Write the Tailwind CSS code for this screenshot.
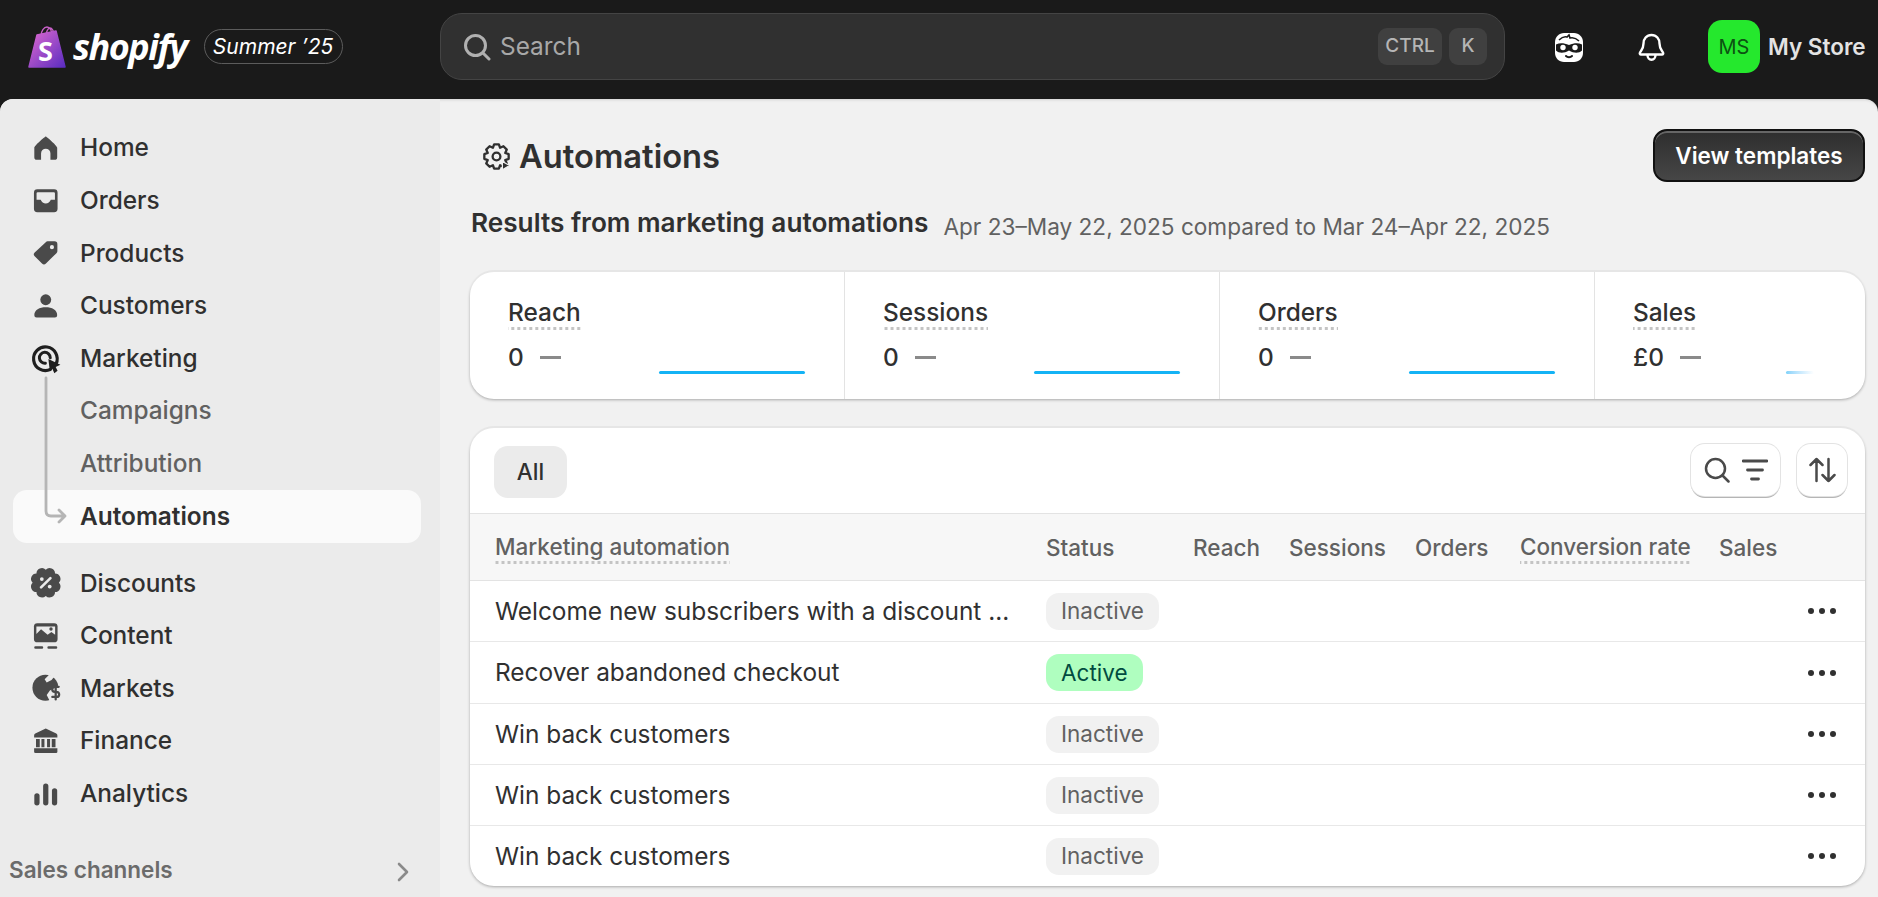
<!DOCTYPE html>
<html lang="en">
  <head>
    <meta charset="UTF-8" />
    <title>Automations</title>
    <script src="https://cdn.jsdelivr.net/npm/@tailwindcss/browser@4"></script>
  </head>
  <body class="bg-[#1a1a1a] font-['Inter','Liberation_Sans',sans-serif] text-[#303030] overflow-hidden">
    <div class="flex h-screen flex-col overflow-hidden">
      <!-- Top bar -->
      <header class="flex h-[99px] shrink-0 items-center pb-[6px]">
        <div class="flex w-[440px] shrink-0 items-center pl-[28px]">
          <svg class="h-[44px] w-[40px] shrink-0" viewBox="0 0 40 44">
            <defs>
              <linearGradient id="bag" x1="0" y1="0" x2="1" y2="1">
                <stop offset="0" stop-color="#e06ad0" />
                <stop offset="1" stop-color="#5a2cc0" />
              </linearGradient>
            </defs>
            <path d="M13 11c0-5 3-9 6-9s5 4 5 8M18 11c0-4 2-8 4-8s4 3 4 7" fill="none" stroke="#c860c8" stroke-width="1.4" />
            <path d="M9 10 L28 6 L37 42 L1 42Z" fill="url(#bag)" stroke="url(#bag)" stroke-width="1.5" stroke-linejoin="round" />
            <text x="10" y="36" fill="#fff" font-size="27" font-weight="700" font-family="Open Sans">S</text>
          </svg>
          <span class="ml-[5px] font-['Open_Sans'] text-[36px] leading-none font-bold tracking-[-1.5px] text-white italic">shopify</span>
          <span class="ml-[17px] flex h-[35px] w-[139px] items-center justify-center rounded-full border border-[#5c5c5c] text-[21px] text-white italic">Summer ’25</span>
        </div>
        <div class="flex h-[67px] w-[1065px] shrink-0 items-center rounded-[22px] border border-[#444] bg-[#303030] pr-[17px] pl-[22px]">
          <svg class="h-[28px] w-[28px] shrink-0" viewBox="0 0 28 28" fill="none" stroke="#b0b0b0" stroke-width="3" stroke-linecap="round">
            <circle cx="12.5" cy="12.5" r="10" />
            <path d="M20 20l6 6" />
          </svg>
          <span class="ml-[9px] text-[24.4px] text-[#a8a8a8]">Search</span>
          <span class="ml-auto flex h-[37px] w-[64px] items-center justify-center rounded-[9px] bg-[#404040] text-[19px] font-medium text-[#b5b5b5]">CTRL</span>
          <span class="ml-[7px] flex h-[37px] w-[38px] items-center justify-center rounded-[9px] bg-[#404040] text-[19px] font-medium text-[#b5b5b5]">K</span>
        </div>
        <svg class="ml-[50px] h-[30px] w-[28px] shrink-0" viewBox="0 0 28 30">
          <path d="M9 1h10c5 0 9 4 9 9v11c0 5-4 9-9 9h-10c-5 0-9-4-9-9v-11c0-5 4-9 9-9Z" fill="#fff" />
          <path d="M4 8c2-2 5-4 8-3l2-2 1 3c4-1 7 1 9 3" fill="none" stroke="#1a1a1a" stroke-width="1.6" />
          <path d="M1 12.500c4-2 8-1.500 13 .5 5-2 9-2.500 13-.5v6c-3 3-8 3-13 0-5 3-10 3-13 0Z" fill="#1a1a1a" />
          <circle cx="8" cy="15.5" r="2.700" fill="#fff" />
          <circle cx="20" cy="15.5" r="2.700" fill="#fff" />
          <path d="M11 24c1.500 1.500 4.500 1.500 6 0" fill="none" stroke="#1a1a1a" stroke-width="2" stroke-linecap="round" />
        </svg>
        <svg class="ml-[55px] h-[28px] w-[27px] shrink-0" viewBox="0 0 27 28" fill="none" stroke="#fff" stroke-width="2.4" stroke-linejoin="round">
          <path d="M13.5 2c-5 0-8 4-8 8.5 0 5-2 6.500-3.500 9-.6 1 0 2 1 2h21c1 0 1.600-1 1-2-1.500-2.500-3.500-4-3.500-9 0-4.500-3-8.500-8-8.500Z" />
          <path d="M9.500 22c0 3 1.800 4.800 4 4.800s4-1.800 4-4.800" />
        </svg>
        <span class="ml-[43px] flex h-[53px] w-[52px] shrink-0 items-center justify-center rounded-[14px] bg-[#25e82d] text-[20px] text-[#0c5212]">MS</span>
        <span class="ml-[8px] text-[22.500px] font-semibold whitespace-nowrap text-[#e3e3e3]">My Store</span>
      </header>

      <div class="flex min-h-0 flex-1 overflow-hidden rounded-t-[13px] bg-[#f1f1f1] shadow-[inset_0_3px_3px_-2px_rgba(0,0,0,.12)]">
        <!-- Sidebar -->
        <aside class="flex w-[440px] shrink-0 flex-col bg-[#ebebeb] pt-[22.5px] text-[24.4px] font-medium">
          <a class="flex h-[52.6px] items-center">
            <svg class="ml-[27px] h-[37.5px] w-[37.5px] shrink-0 fill-[#4a4a4a]" viewBox="0 0 20 20"><path d="M10 4c.5 0 6.100 5 6.100 6v5a1.400 1.400 0 0 1-1.400 1.400h-2.200v-3.400a2.500 2.500 0 0 0-5 0v3.400h-2.200a1.400 1.400 0 0 1-1.400-1.400v-5c0-1 5.600-6 6.100-6Z" /></svg>
            <span class="ml-[15.5px]">Home</span>
          </a>
          <a class="flex h-[52.6px] items-center">
            <svg class="ml-[27px] h-[37.5px] w-[37.5px] shrink-0 fill-[#4a4a4a]" viewBox="0 0 20 20"><path fill-rule="evenodd" d="M5.500 3.900h9a1.800 1.800 0 0 1 1.800 1.800v8.600a1.800 1.800 0 0 1-1.800 1.800h-9a1.800 1.800 0 0 1-1.800-1.800v-8.600a1.800 1.800 0 0 1 1.800-1.800Zm.2 1.500a.6.600 0 0 0-.6.600v3.500h2.200c.5 1.300 1.500 2 2.700 2s2.200-.7 2.700-2h2.200v-3.500a.6.600 0 0 0-.6-.6Z" /></svg>
            <span class="ml-[15.5px]">Orders</span>
          </a>
          <a class="flex h-[52.6px] items-center">
            <svg class="ml-[27px] h-[37.5px] w-[37.5px] shrink-0 fill-[#4a4a4a]" viewBox="0 0 20 20"><path fill-rule="evenodd" d="M11 3.900h3.700a1.500 1.500 0 0 1 1.500 1.500v3.800a1.500 1.500 0 0 1-.5 1l-5.600 5.600a1.500 1.500 0 0 1-2.100 0l-3.900-3.900a1.500 1.500 0 0 1 0-2.100l5.900-5.400a1.500 1.500 0 0 1 1-.5Zm2.300 2a1.100 1.100 0 1 0 0 2.200 1.100 1.100 0 0 0 0-2.200Z" /></svg>
            <span class="ml-[15.5px]">Products</span>
          </a>
          <a class="flex h-[52.6px] items-center">
            <svg class="ml-[27px] h-[37.5px] w-[37.5px] shrink-0 fill-[#4a4a4a]" viewBox="0 0 20 20"><circle cx="10" cy="6.800" r="2.900" /><path d="M3.900 15c0-2.800 2.800-4.200 6.100-4.200s6.100 1.400 6.100 4.200a1.200 1.200 0 0 1-1.200 1.200h-9.800a1.200 1.200 0 0 1-1.200-1.200Z" /></svg>
            <span class="ml-[15.5px]">Customers</span>
          </a>
          <a class="flex h-[52.6px] items-center">
            <svg class="ml-[27px] h-[37.5px] w-[37.5px] shrink-0" viewBox="0 0 20 20">
              <path d="M15.500 13.200a6.300 6.300 0 1 0-3 3" fill="none" stroke="#1f1f1f" stroke-width="1.700" stroke-linecap="round" />
              <path d="M12.400 10a2.900 2.900 0 1 0-2.600 2.900" fill="none" stroke="#1f1f1f" stroke-width="1.600" stroke-linecap="round" />
              <path d="M11.400 10.700l6.400 3-2.500 1.200 1 2-1.700 1.300-1.100-2.400-1.300 1.500Z" fill="#1f1f1f" />
            </svg>
            <span class="ml-[15.5px]">Marketing</span>
          </a>
          <div class="relative">
            <a class="flex h-[52.6px] items-center pl-[80px] text-[#616161]">Campaigns</a>
            <a class="flex h-[52.6px] items-center pl-[80px] text-[#616161]">Attribution</a>
            <a class="mx-[13px] flex h-[53px] w-[408px] items-center rounded-[14px] bg-[#fafafa] pl-[67px] font-semibold">Automations</a>
            <!-- tree line over the sub items -->
            <svg class="absolute top-[-8px] left-[42px] h-[150px] w-[28px]" viewBox="0 0 28 150" fill="none" stroke="#b5b5b5" stroke-width="2.800" stroke-linecap="round" stroke-linejoin="round">
              <path d="M4 2v133q0 5 5 5h14M17 134l6 6-6 6" />
            </svg>
          </div>
          <a class="mt-[14px] flex h-[52.6px] items-center">
            <svg class="ml-[27px] h-[37.5px] w-[37.5px] shrink-0" viewBox="0 0 20 20">
              <path d="M17 10A2.900 2.900 0 0 1 14.950 14.950 2.900 2.900 0 0 1 10 17 2.900 2.900 0 0 1 5.050 14.950 2.900 2.900 0 0 1 3 10 2.900 2.900 0 0 1 5.050 5.050 2.900 2.900 0 0 1 10 3 2.900 2.900 0 0 1 14.950 5.050 2.900 2.900 0 0 1 17 10Z" fill="#4a4a4a" />
              <path d="M12.500 7.500l-5 5" stroke="#ebebeb" stroke-width="1.400" stroke-linecap="round" />
              <circle cx="7.900" cy="8" r="1" fill="#ebebeb" />
              <circle cx="12.100" cy="12" r="1" fill="#ebebeb" />
            </svg>
            <span class="ml-[15.5px]">Discounts</span>
          </a>
          <a class="flex h-[52.6px] items-center">
            <svg class="ml-[27px] h-[37.5px] w-[37.5px] shrink-0" viewBox="0 0 20 20">
              <rect x="3.700" y="3.300" width="12.600" height="10.200" rx="1.800" fill="#4a4a4a" />
              <path d="M5 9l2.500-2.500 3.500 3 2-1.500 2 1.500v-4.500h-10Z" fill="#ebebeb" />
              <circle cx="12.800" cy="6.400" r=".9" fill="#4a4a4a" />
              <path d="M4.500 16.300h3.500M11.500 16.300h4" stroke="#4a4a4a" stroke-width="1.300" stroke-linecap="round" />
            </svg>
            <span class="ml-[15.5px]">Content</span>
          </a>
          <a class="flex h-[52.6px] items-center">
            <svg class="ml-[27px] h-[37.5px] w-[37.5px] shrink-0" viewBox="0 0 20 20">
              <circle cx="9.800" cy="10" r="6.900" fill="#4a4a4a" />
              <path d="M11.800 3l-2.400 2.400 1.100 1.800 2.600-1.400 1.500-1.800ZM12.200 17.200l-1.700-3.300 1.700-2.400 5-3v9Z" fill="#ebebeb" />
              <path d="M16.900 9.500h-2.100a1.100 1.100 0 0 0 0 2.700h1a1.100 1.100 0 0 1 0 2.700h-2.300M15.300 8.300v7.900" fill="none" stroke="#4a4a4a" stroke-width="1.200" stroke-linecap="round" />
            </svg>
            <span class="ml-[15.5px]">Markets</span>
          </a>
          <a class="flex h-[52.6px] items-center">
            <svg class="ml-[27px] h-[37.5px] w-[37.5px] shrink-0 fill-[#4a4a4a]" viewBox="0 0 20 20">
              <path d="M10 3.500l5.600 2.600a1 1 0 0 1 .6.900v1.300h-12.400v-1.300a1 1 0 0 1 .6-.9Z" />
              <path d="M3.800 14h12.400v1.800a.7.700 0 0 1-.7.700h-11a.7.700 0 0 1-.7-.7Z" />
              <path d="M4.800 9h2v4.500h-2ZM7.700 9h1.600v4.500h-1.600ZM10.700 9h1.600v4.500h-1.600ZM13.200 9h2v4.500h-2Z" />
            </svg>
            <span class="ml-[15.5px]">Finance</span>
          </a>
          <a class="flex h-[52.6px] items-center">
            <svg class="ml-[27px] h-[37.5px] w-[37.5px] shrink-0 fill-[#4a4a4a]" viewBox="0 0 20 20">
              <rect x="3.900" y="9.700" width="2.800" height="6.500" rx="1.400" />
              <rect x="8.600" y="4.500" width="2.800" height="11.700" rx="1.400" />
              <rect x="13.300" y="7" width="2.800" height="9.200" rx="1.400" />
            </svg>
            <span class="ml-[15.5px]">Analytics</span>
          </a>
          <div class="mt-[33px] flex items-center pr-[31px] pl-[9px] text-[22.5px] font-semibold text-[#6b6b6b]">
            <span>Sales channels</span>
            <svg class="mt-[4px] ml-auto h-[20px] w-[12px]" viewBox="0 0 12 20" fill="none" stroke="#8a8a8a" stroke-width="2.600" stroke-linecap="round" stroke-linejoin="round"><path d="M2 2l8 8-8 8" /></svg>
          </div>
        </aside>

        <!-- Main -->
        <main class="min-w-0 flex-1 pt-[30px] pr-[13px] pl-[30px]">
          <div class="flex items-start justify-between">
            <div class="mt-[7px] flex items-center pl-[11px]">
              <svg class="h-[31px] w-[31px] shrink-0" viewBox="0 0 20 20" fill="none" stroke="#303030" stroke-width="1.500" stroke-linejoin="round">
                <path d="M17.850 8.470V11.530L15.640 12.330 16.630 14.470 14.470 16.630 12.330 15.640 11.530 17.850H8.470L7.670 15.640 5.530 16.630 3.370 14.470 4.360 12.330 2.150 11.530V8.470L4.360 7.670 3.370 5.530 5.530 3.370 7.670 4.360 8.470 2.150H11.530L12.330 4.360 14.470 3.370 16.630 5.530 15.640 7.670Z" />
                <circle cx="10" cy="10" r="2.500" />
                <path d="M13.800 13.200v5.300l4.600-2.650Z" fill="#303030" stroke="#f1f1f1" stroke-width=".8" />
              </svg>
              <h1 class="ml-[7px] text-[32.7px] leading-[40px] font-semibold">Automations</h1>
            </div>
            <button class="h-[53px] w-[212px] rounded-[14px] border-[2.500px] border-[#111] bg-linear-to-b from-[#2e2e2e] to-[#464646] text-[22.5px] font-semibold text-white shadow-[inset_0_2px_0_#666]">View templates</button>
          </div>
          <div class="mt-[23px] flex items-baseline">
            <h2 class="ml-px text-[26.2px] leading-[36px] font-semibold">Results from marketing automations</h2>
            <span class="relative top-[3px] ml-[15px] text-[22.6px] text-[#616161]">Apr 23–May 22, 2025 compared to Mar 24–Apr 22, 2025</span>
          </div>

          <!-- Metrics card -->
          <section class="mt-[31px] flex h-[127px] overflow-hidden rounded-[24px] bg-white shadow-[0_-2px_0_#e6e6e6,0_1px_3px_rgba(0,0,0,.3)]">
            <div class="flex h-full w-[375px] shrink-0 border-r border-[#e3e3e3] pt-[25px] pl-[38px]">
              <div class="w-[151px] shrink-0">
                <span class="block w-fit bg-[linear-gradient(to_right,#c4c4c4_50%,transparent_50%)] bg-[length:6px_3px] bg-bottom bg-repeat-x pb-[3px] text-[24.4px] leading-[30px] font-medium">Reach</span>
                <div class="mt-[9px] flex items-center text-[24.4px] leading-[36px] font-medium">0<span class="ml-[16px] h-[3px] w-[21px] bg-[#8a8a8a]"></span></div>
              </div>
              <div class="mt-[74px] h-[3px] w-[146px] rounded-full bg-[#14b3f5]"></div>
            </div>
            <div class="flex h-full w-[375px] shrink-0 border-r border-[#e3e3e3] pt-[25px] pl-[38px]">
              <div class="w-[151px] shrink-0">
                <span class="block w-fit bg-[linear-gradient(to_right,#c4c4c4_50%,transparent_50%)] bg-[length:6px_3px] bg-bottom bg-repeat-x pb-[3px] text-[24.4px] leading-[30px] font-medium">Sessions</span>
                <div class="mt-[9px] flex items-center text-[24.4px] leading-[36px] font-medium">0<span class="ml-[16px] h-[3px] w-[21px] bg-[#8a8a8a]"></span></div>
              </div>
              <div class="mt-[74px] h-[3px] w-[146px] rounded-full bg-[#14b3f5]"></div>
            </div>
            <div class="flex h-full w-[375px] shrink-0 border-r border-[#e3e3e3] pt-[25px] pl-[38px]">
              <div class="w-[151px] shrink-0">
                <span class="block w-fit bg-[linear-gradient(to_right,#c4c4c4_50%,transparent_50%)] bg-[length:6px_3px] bg-bottom bg-repeat-x pb-[3px] text-[24.4px] leading-[30px] font-medium">Orders</span>
                <div class="mt-[9px] flex items-center text-[24.4px] leading-[36px] font-medium">0<span class="ml-[16px] h-[3px] w-[21px] bg-[#8a8a8a]"></span></div>
              </div>
              <div class="mt-[74px] h-[3px] w-[146px] rounded-full bg-[#14b3f5]"></div>
            </div>
            <div class="flex h-full min-w-0 flex-1 pt-[25px] pl-[38px]">
              <div class="w-[153px] shrink-0">
                <span class="block w-fit bg-[linear-gradient(to_right,#c4c4c4_50%,transparent_50%)] bg-[length:6px_3px] bg-bottom bg-repeat-x pb-[3px] text-[24.4px] leading-[30px] font-medium">Sales</span>
                <div class="mt-[9px] flex items-center text-[24.4px] leading-[36px] font-medium">£0<span class="ml-[16px] h-[3px] w-[21px] bg-[#8a8a8a]"></span></div>
              </div>
              <div class="mt-[74px] h-[3px] w-[28px] rounded-full bg-linear-to-r from-[#14b3f5]/60 to-white"></div>
            </div>
          </section>

          <!-- Automations table -->
          <section class="mt-[29px] overflow-hidden rounded-[24px] bg-white shadow-[0_-2px_0_#e6e6e6,0_1px_3px_rgba(0,0,0,.3)]">
            <div class="flex h-[85px] items-start pt-[18px] pr-[18px] pl-[24px]">
              <span class="flex h-[52px] w-[73px] items-center justify-center rounded-[14px] bg-[#ebebeb] text-[22.5px] font-medium">All</span>
              <button class="mt-[-2px] ml-auto flex h-[52px] w-[89px] items-center justify-center gap-[12px] rounded-[14px] bg-white shadow-[0_0_0_1px_#e3e3e3,0_2px_0_#b5b5b5]">
                <svg class="h-[26px] w-[26px]" viewBox="0 0 26 26" fill="none" stroke="#4a4a4a" stroke-width="2.500" stroke-linecap="round"><circle cx="11.500" cy="11.500" r="9.500" /><path d="M18.500 18.500l6 6" /></svg>
                <svg class="h-[26px] w-[26px]" viewBox="0 0 26 26" fill="none" stroke="#4a4a4a" stroke-width="2.800" stroke-linecap="round"><path d="M1 4h24M5.500 13h15M9.500 22h7" /></svg>
              </button>
              <button class="mt-[-2px] ml-[17px] flex h-[52px] w-[50px] items-center justify-center rounded-[14px] bg-white shadow-[0_0_0_1px_#e3e3e3,0_2px_0_#b5b5b5]">
                <svg class="h-[26px] w-[27px]" viewBox="0 0 27 26" fill="none" stroke="#4a4a4a" stroke-width="2.500" stroke-linecap="round" stroke-linejoin="round"><path d="M7.500 24V2M1.500 8l6-6 6 6M19.500 2v22M13.500 18l6 6 6-6" /></svg>
              </button>
            </div>
            <div class="grid h-[68px] grid-cols-[551px_147px_96px_126px_105px_199px_1fr] items-center border-y border-[#e3e3e3] bg-[#f7f7f7] pt-px pl-[25px] text-[22.5px] font-medium text-[#616161]">
              <span class="w-fit bg-[linear-gradient(to_right,#c4c4c4_50%,transparent_50%)] bg-[length:6px_3px] bg-bottom bg-repeat-x pb-[2px] leading-[30px]">Marketing automation</span>
              <span>Status</span>
              <span>Reach</span>
              <span>Sessions</span>
              <span>Orders</span>
              <span class="w-fit bg-[linear-gradient(to_right,#c4c4c4_50%,transparent_50%)] bg-[length:6px_3px] bg-bottom bg-repeat-x pb-[2px] leading-[30px]">Conversion rate</span>
              <span>Sales</span>
            </div>
            <div class="grid h-[61px] grid-cols-[551px_1fr_auto] items-center border-b border-[#e8e8e8] pr-[29px] pl-[25px] text-[24.4px]">
              <span>Welcome new subscribers with a discount ...</span>
              <span class="flex h-[37px] w-fit items-center rounded-[13px] bg-[#f1f1f1] px-[15px] text-[22.5px] text-[#616161]">Inactive</span>
              <svg class="h-[6px] w-[28px]" viewBox="0 0 28 6" fill="#303030"><circle cx="3" cy="3" r="3" /><circle cx="14" cy="3" r="3" /><circle cx="25" cy="3" r="3" /></svg>
            </div>
            <div class="grid h-[62px] grid-cols-[551px_1fr_auto] items-center border-b border-[#e8e8e8] pr-[29px] pl-[25px] text-[24.4px]">
              <span>Recover abandoned checkout</span>
              <span class="flex h-[37px] w-fit items-center rounded-[13px] bg-[#affebf] px-[15px] text-[22.5px] text-[#014b40]">Active</span>
              <svg class="h-[6px] w-[28px]" viewBox="0 0 28 6" fill="#303030"><circle cx="3" cy="3" r="3" /><circle cx="14" cy="3" r="3" /><circle cx="25" cy="3" r="3" /></svg>
            </div>
            <div class="grid h-[61px] grid-cols-[551px_1fr_auto] items-center border-b border-[#e8e8e8] pr-[29px] pl-[25px] text-[24.4px]">
              <span>Win back customers</span>
              <span class="flex h-[37px] w-fit items-center rounded-[13px] bg-[#f1f1f1] px-[15px] text-[22.5px] text-[#616161]">Inactive</span>
              <svg class="h-[6px] w-[28px]" viewBox="0 0 28 6" fill="#303030"><circle cx="3" cy="3" r="3" /><circle cx="14" cy="3" r="3" /><circle cx="25" cy="3" r="3" /></svg>
            </div>
            <div class="grid h-[61px] grid-cols-[551px_1fr_auto] items-center border-b border-[#e8e8e8] pr-[29px] pl-[25px] text-[24.4px]">
              <span>Win back customers</span>
              <span class="flex h-[37px] w-fit items-center rounded-[13px] bg-[#f1f1f1] px-[15px] text-[22.5px] text-[#616161]">Inactive</span>
              <svg class="h-[6px] w-[28px]" viewBox="0 0 28 6" fill="#303030"><circle cx="3" cy="3" r="3" /><circle cx="14" cy="3" r="3" /><circle cx="25" cy="3" r="3" /></svg>
            </div>
            <div class="grid h-[60px] grid-cols-[551px_1fr_auto] items-center pr-[29px] pl-[25px] text-[24.4px]">
              <span>Win back customers</span>
              <span class="flex h-[37px] w-fit items-center rounded-[13px] bg-[#f1f1f1] px-[15px] text-[22.5px] text-[#616161]">Inactive</span>
              <svg class="h-[6px] w-[28px]" viewBox="0 0 28 6" fill="#303030"><circle cx="3" cy="3" r="3" /><circle cx="14" cy="3" r="3" /><circle cx="25" cy="3" r="3" /></svg>
            </div>
          </section>
        </main>
      </div>
    </div>
  </body>
</html>
